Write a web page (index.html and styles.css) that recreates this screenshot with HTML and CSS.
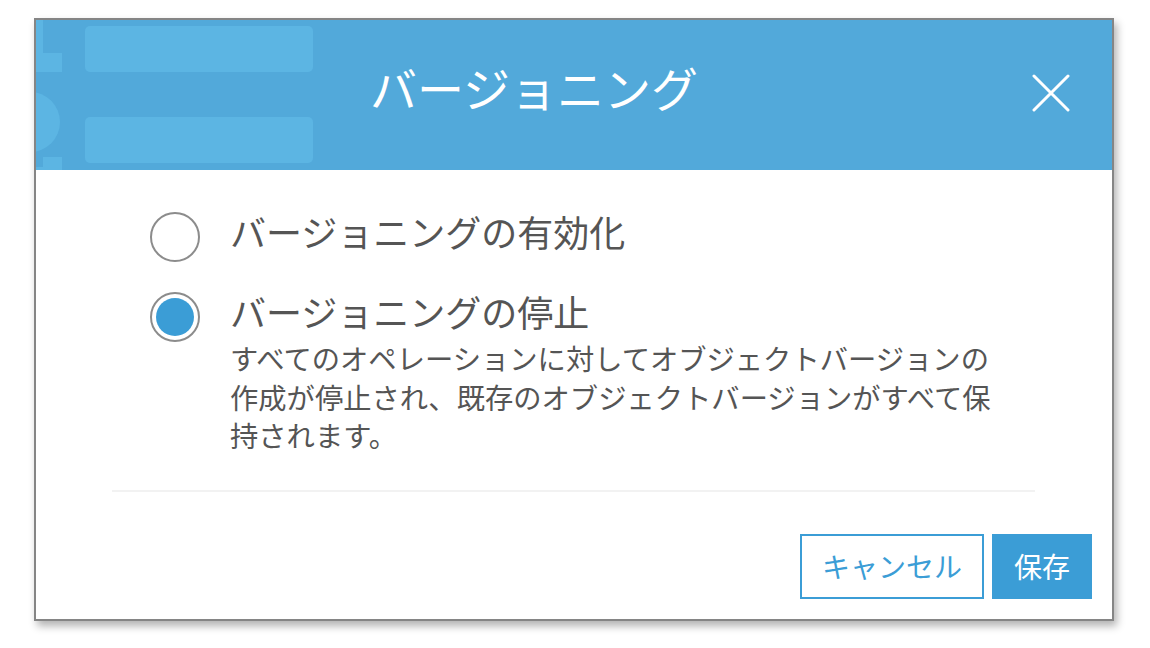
FILE: index.html
```html
<!DOCTYPE html>
<html lang="ja">
<head>
<meta charset="utf-8">
<link rel="stylesheet" href="styles.css">
</head>
<body>
<div class="modal">
  <div class="header">
    <svg class="deco" width="300" height="150" viewBox="0 0 300 150">
      <path d="M0 0 H7 V33 H26 V52 H0 Z" fill="#5cb5e3"/>
      <circle cx="-6" cy="102" r="30" fill="#5cb5e3"/>
      <path d="M7 137 H26 V150 H0 V147 H7 Z" fill="#5cb5e3"/>
      <rect x="49" y="6" width="228" height="46" rx="5" fill="#5cb5e3"/>
      <rect x="49" y="97" width="228" height="46" rx="5" fill="#5cb5e3"/>
    </svg>
    <div class="title">バージョニング</div>
    <button class="close" aria-label="閉じる">
      <svg width="38" height="38" viewBox="0 0 38 38">
        <path d="M2 2 L36 36 M36 2 L2 36" stroke="#fff" stroke-width="3" stroke-linecap="round"/>
      </svg>
    </button>
  </div>
  <div class="body">
    <div class="option">
      <span class="radio"></span>
      <div class="opt-text">
        <div class="label">バージョニングの有効化</div>
      </div>
    </div>
    <div class="option">
      <span class="radio checked"></span>
      <div class="opt-text">
        <div class="label">バージョニングの停止</div>
        <div class="desc">すべてのオペレーションに対してオブジェクトバージョンの<br>作成が停止され、既存のオブジェクトバージョンがすべて保<br>持されます。</div>
      </div>
    </div>
    <div class="divider"></div>
    <div class="footer">
      <button class="btn btn-cancel">キャンセル</button>
      <button class="btn btn-save">保存</button>
    </div>
  </div>
</div>
</body>
</html>
```

FILE: styles.css
```css
html, body {
  margin: 0;
  padding: 0;
  background: #ffffff;
}
body {
  width: 1150px;
  height: 648px;
  font-family: "Noto Sans CJK JP", "Noto Sans", sans-serif;
  padding: 18px 0 0 34px;
  box-sizing: border-box;
}
.modal {
  width: 1080px;
  height: 603px;
  box-sizing: border-box;
  border: 2px solid #858585;
  background: #fff;
  box-shadow: 3px 5px 8px rgba(0, 0, 0, 0.3);
  display: flex;
  flex-direction: column;
}
.header {
  position: relative;
  height: 150px;
  flex: none;
  background: #52a9da;
  display: flex;
  align-items: center;
  padding-right: 42px;
  overflow: hidden;
}
.deco {
  position: absolute;
  left: 0;
  top: 0;
}
.title {
  position: relative;
  flex: 1;
  text-align: center;
  color: #fff;
  font-size: 47px;
  line-height: 60px;
  margin-bottom: 16px;
}
.close {
  position: relative;
  width: 38px;
  height: 38px;
  padding: 0;
  border: 0;
  background: none;
  margin-bottom: 4px;
  display: block;
}
.close svg {
  display: block;
}
.body {
  flex: 1;
  display: flex;
  flex-direction: column;
  padding: 42px 20px 0 0;
}
.option {
  display: flex;
  align-items: flex-start;
  padding-left: 114px;
  margin-bottom: 30px;
}
.option + .option {
  margin-bottom: 0;
}
.radio {
  flex: none;
  width: 50px;
  height: 50px;
  box-sizing: border-box;
  border: 2px solid #8c8c8c;
  border-radius: 50%;
  background: #fff;
  display: flex;
  align-items: center;
  justify-content: center;
}
.radio.checked::after {
  content: "";
  width: 38px;
  height: 38px;
  border-radius: 50%;
  background: #3b9dd6;
}
.opt-text {
  margin-left: 30px;
}
.label {
  font-size: 36px;
  line-height: 46px;
  color: #555555;
  margin-top: -4px;
}
.desc {
  font-size: 28.3px;
  line-height: 38.5px;
  color: #555555;
  margin-top: 5px;
  white-space: nowrap;
}
.divider {
  height: 2px;
  background: #f2f2f2;
  margin: 35px 57px 0 76px;
}
.footer {
  display: flex;
  justify-content: flex-end;
  gap: 8px;
  margin-top: 42px;
}
.btn {
  height: 65px;
  box-sizing: border-box;
  font-family: "Noto Sans CJK JP", "Noto Sans", sans-serif;
  font-size: 28px;
  padding: 0;
  cursor: pointer;
}
.btn-cancel {
  width: 184px;
  border: 2px solid #3b9dd6;
  background: #fff;
  color: #3b9dd6;
}
.btn-save {
  width: 100px;
  border: 0;
  background: #3b9dd6;
  color: #fff;
}
```
